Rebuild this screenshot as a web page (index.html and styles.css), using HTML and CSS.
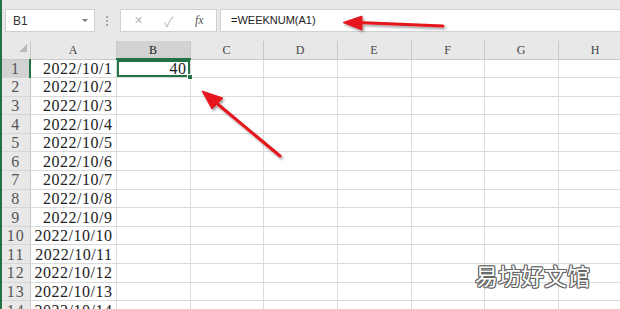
FILE: index.html
```html
<!DOCTYPE html>
<html lang="zh-CN">
<head>
    <meta charset="UTF-8">
    <title>WEEKNUM</title>
    <link rel="stylesheet" href="styles.css">
</head>
<body>
<div class="ventana">

    <!-- Barra de fórmulas -->
    <div class="barra">
        <div class="cuadro-nombre">
            <span>B1</span>
            <span class="flecha-abajo"></span>
        </div>
        <div class="separador"></div>
        <div class="botones">
            <span class="btn-x">&#x2715;</span>
            <span class="btn-ok">&#x2713;</span>
            <span class="btn-fx">fx</span>
        </div>
        <div class="formula">=WEEKNUM(A1)</div>
    </div>

    <!-- Hoja -->
    <table class="hoja">
        <colgroup>
            <col class="c-num">
            <col class="c-a">
            <col class="c-b">
            <col class="c-x">
            <col class="c-y">
            <col class="c-b">
            <col class="c-x">
            <col class="c-b">
            <col class="c-b">
        </colgroup>
        <thead>
            <tr>
                <th class="esquina"><span class="triangulo"></span></th>
                <th>A</th><th class="activa">B</th><th>C</th><th>D</th><th>E</th><th>F</th><th>G</th><th>H</th>
            </tr>
        </thead>
        <tbody>
            <tr><th class="activa">1</th><td>2022/10/1</td><td class="sel">40</td><td></td><td></td><td></td><td></td><td></td><td></td></tr>
            <tr><th>2</th><td>2022/10/2</td><td></td><td></td><td></td><td></td><td></td><td></td><td></td></tr>
            <tr><th>3</th><td>2022/10/3</td><td></td><td></td><td></td><td></td><td></td><td></td><td></td></tr>
            <tr><th>4</th><td>2022/10/4</td><td></td><td></td><td></td><td></td><td></td><td></td><td></td></tr>
            <tr><th>5</th><td>2022/10/5</td><td></td><td></td><td></td><td></td><td></td><td></td><td></td></tr>
            <tr><th>6</th><td>2022/10/6</td><td></td><td></td><td></td><td></td><td></td><td></td><td></td></tr>
            <tr><th>7</th><td>2022/10/7</td><td></td><td></td><td></td><td></td><td></td><td></td><td></td></tr>
            <tr><th>8</th><td>2022/10/8</td><td></td><td></td><td></td><td></td><td></td><td></td><td></td></tr>
            <tr><th>9</th><td>2022/10/9</td><td></td><td></td><td></td><td></td><td></td><td></td><td></td></tr>
            <tr><th>10</th><td>2022/10/10</td><td></td><td></td><td></td><td></td><td></td><td></td><td></td></tr>
            <tr><th>11</th><td>2022/10/11</td><td></td><td></td><td></td><td></td><td></td><td></td><td></td></tr>
            <tr><th>12</th><td>2022/10/12</td><td></td><td></td><td></td><td></td><td></td><td></td><td></td></tr>
            <tr><th>13</th><td>2022/10/13</td><td></td><td></td><td></td><td></td><td></td><td></td><td></td></tr>
            <tr><th>14</th><td>2022/10/14</td><td></td><td></td><td></td><td></td><td></td><td></td><td></td></tr>
        </tbody>
    </table>

    <!-- Flechas rojas encima -->
    <svg class="flechas" width="620" height="309" viewBox="0 0 620 309">
        <defs>
            <filter id="sombra" x="-20%" y="-20%" width="140%" height="140%">
                <feDropShadow dx="1.5" dy="2" stdDeviation="1.2" flood-color="#000" flood-opacity="0.35"/>
            </filter>
        </defs>
        <g filter="url(#sombra)" fill="#e5141b" stroke="#e5141b">
            <line x1="443" y1="26" x2="358" y2="22.5" stroke-width="3" stroke-linecap="round"/>
            <polygon points="343,22.5 362,16 362,30" stroke-width="1" stroke-linejoin="round"/>
            <line x1="280" y1="156" x2="214" y2="101" stroke-width="3" stroke-linecap="round"/>
            <polygon points="202,91 223,98 212,109" stroke-width="1" stroke-linejoin="round"/>
        </g>
    </svg>

    <div class="marca">易坊好文馆</div>
</div>
</body>
</html>
```

FILE: styles.css
```css
body {
    margin: 0;
    padding: 0;
    background-color: #fff;
    overflow: hidden;
}

.ventana {
    position: relative;
    width: 618px;
    height: 309px;
    overflow: hidden;
    border-left: 2px solid #217346;
    font-family: 'Liberation Serif', serif;
}

/* Barra de fórmulas */
.barra {
    display: flex;
    align-items: center;
    height: 41px;
    padding: 0 0 0 3px;
    box-sizing: border-box;
    background-color: #e8e8e8;
    font-family: 'Liberation Sans', sans-serif;
}

.cuadro-nombre {
    display: flex;
    align-items: center;
    justify-content: space-between;
    width: 90px;
    height: 23px;
    padding: 0 6px 0 7px;
    box-sizing: border-box;
    background-color: #fff;
    border: 1px solid #d0d0d0;
    font-size: 12px;
    color: #333;
}

.flecha-abajo {
    width: 0;
    height: 0;
    border-left: 3px solid transparent;
    border-right: 3px solid transparent;
    border-top: 3px solid #777;
}

.separador {
    width: 2px;
    height: 12px;
    margin: 0 12px 0 11px;
    background-image: radial-gradient(circle, #a6a6a6 0.8px, transparent 1px);
    background-size: 2px 4px;
}

.botones {
    display: flex;
    align-items: center;
    width: 97px;
    height: 23px;
    box-sizing: border-box;
    background-color: #fff;
    border: 1px solid #d0d0d0;
    padding-left: 13px;
}

.btn-x {
    color: #b8b8b8;
    font-size: 11px;
    width: 30px;
}

.btn-ok {
    color: #c0c0c0;
    font-size: 14px;
    width: 31px;
}

.btn-fx {
    font-family: 'Liberation Serif', serif;
    font-style: italic;
    font-size: 12px;
    color: #555;
}

.formula {
    flex: 1;
    height: 23px;
    line-height: 21px;
    margin-left: 3px;
    padding-left: 10px;
    box-sizing: border-box;
    background-color: #fff;
    border: 1px solid #d0d0d0;
    border-right: none;
    font-size: 11px;
    color: #222;
}

/* Hoja */
.hoja {
    border-collapse: collapse;
    table-layout: fixed;
    width: 630px;
}

.c-num { width: 28px; }
.c-a { width: 86px; }
.c-b { width: 74px; }
.c-x { width: 73px; }
.c-y { width: 74px; }

.hoja thead th {
    height: 18px;
    padding: 2px 0 0;
    box-sizing: border-box;
    background-color: #e8e8e8;
    border-right: 1px solid #c8c8c8;
    border-bottom: 1px solid #c8c8c8;
    font-weight: normal;
    font-size: 12px;
    line-height: 15px;
    color: #444;
}

.hoja thead th.activa {
    background-color: #d2d2d2;
    border-bottom: 2px solid #217346;
    color: #222;
}

.esquina {
    text-align: right;
    vertical-align: bottom;
}

.triangulo {
    display: inline-block;
    width: 0;
    height: 0;
    margin: 0 3px 3px 0;
    border-left: 8px solid transparent;
    border-bottom: 8px solid #b9b9b9;
}

.hoja tbody th {
    height: 18.6px;
    padding: 1px 0 0;
    box-sizing: border-box;
    background-color: #e8e8e8;
    border-right: 1px solid #c8c8c8;
    border-bottom: 1px solid #d6d6d6;
    font-weight: normal;
    font-size: 16px;
    line-height: 16px;
    letter-spacing: 1px;
    color: #555;
    text-align: center;
}

.hoja tbody th.activa {
    background-color: #d2d2d2;
    border-right: 2px solid #217346;
}

.hoja td {
    height: 18.6px;
    padding: 1px 3px 0 0;
    box-sizing: border-box;
    border-right: 1px solid #dadada;
    border-bottom: 1px solid #dadada;
    font-size: 16px;
    line-height: 16px;
    letter-spacing: 0.5px;
    color: #222;
    text-align: right;
    white-space: nowrap;
    overflow: hidden;
}

.hoja td.sel {
    position: relative;
    overflow: visible;
    box-shadow: inset 0 0 0 2px #217346;
}

.hoja td.sel::after {
    content: "";
    position: absolute;
    right: -3px;
    bottom: -3px;
    width: 4px;
    height: 4px;
    background-color: #217346;
    border: 1px solid #fff;
}

/* Capas encima */
.flechas {
    position: absolute;
    left: -2px;
    top: 0;
    pointer-events: none;
}

.marca {
    position: absolute;
    left: 473px;
    top: 258px;
    font-family: 'Noto Sans CJK SC', sans-serif;
    font-size: 23px;
    color: #fff;
    text-shadow: 1px 0 #666, -1px 0 #666, 0 1px #666, 0 -1px #666,
                 1px 1px #666, -1px -1px #666, 1px -1px #666, -1px 1px #666;
}
```
